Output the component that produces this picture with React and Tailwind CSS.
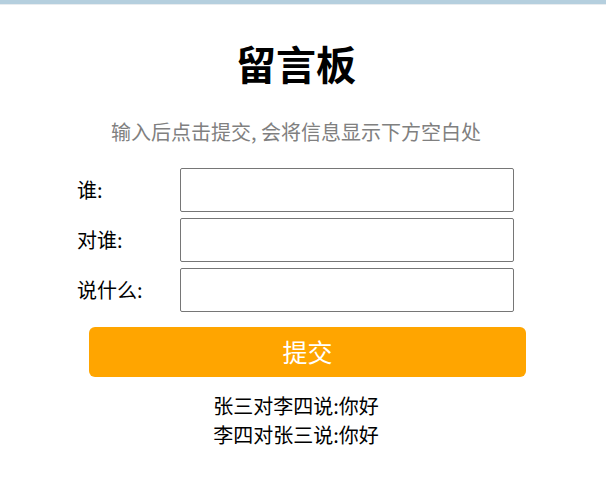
import React, { useState } from "react";

const App = () => {
  const [who, setWho] = useState("");
  const [toWhom, setToWhom] = useState("");
  const [what, setWhat] = useState("");
  const [messages, setMessages] = useState([
    { from: "张三", to: "李四", text: "你好" },
    { from: "李四", to: "张三", text: "你好" },
  ]);

  const handleSubmit = () => {
    if (!who || !toWhom || !what) return;
    setMessages([...messages, { from: who, to: toWhom, text: what }]);
    setWho("");
    setToWhom("");
    setWhat("");
  };

  const fields = [
    { label: "谁:", value: who, set: setWho },
    { label: "对谁:", value: toWhom, set: setToWhom },
    { label: "说什么:", value: what, set: setWhat },
  ];

  return (
    <div
      className="w-[606px] min-h-[489px] bg-white text-black"
      style={{ fontFamily: '"Noto Sans CJK SC", "Noto Sans", sans-serif' }}
    >
      <div className="h-[4px] bg-[#b5cfde]" />
      <div className="h-[1px] bg-[#e8ecef]" />

      <div className="w-[592px] flex flex-col items-center">
        <h1 className="mt-[30px] text-[40px] font-bold leading-[56px]">留言板</h1>
        <p className="mt-[27px] text-[20px] leading-[28px] text-[#808080]">
          输入后点击提交, 会将信息显示下方空白处
        </p>
      </div>

      <div className="mt-[22px] ml-[77px] flex flex-col gap-[6px]">
        {fields.map((f, i) => (
          <div key={i} className="flex items-center">
            <label className="w-[103px] text-[20px] leading-[28px]">{f.label}</label>
            <input
              type="text"
              value={f.value}
              onChange={(e) => f.set(e.target.value)}
              className="w-[334px] h-[44px] border border-[#767676] rounded-[2px] px-2 text-[16px] outline-none"
            />
          </div>
        ))}
      </div>

      <button
        onClick={handleSubmit}
        className="mt-[15px] ml-[89px] w-[437px] h-[50px] rounded-[6px] bg-[#ffa500] text-white text-[25px]"
      >
        提交
      </button>

      <div className="mt-[14px] w-[592px] flex flex-col items-center text-[20px] leading-[29px]">
        {messages.map((m, i) => (
          <div key={i}>
            {m.from}对{m.to}说:{m.text}
          </div>
        ))}
      </div>
    </div>
  );
};

export default App;
